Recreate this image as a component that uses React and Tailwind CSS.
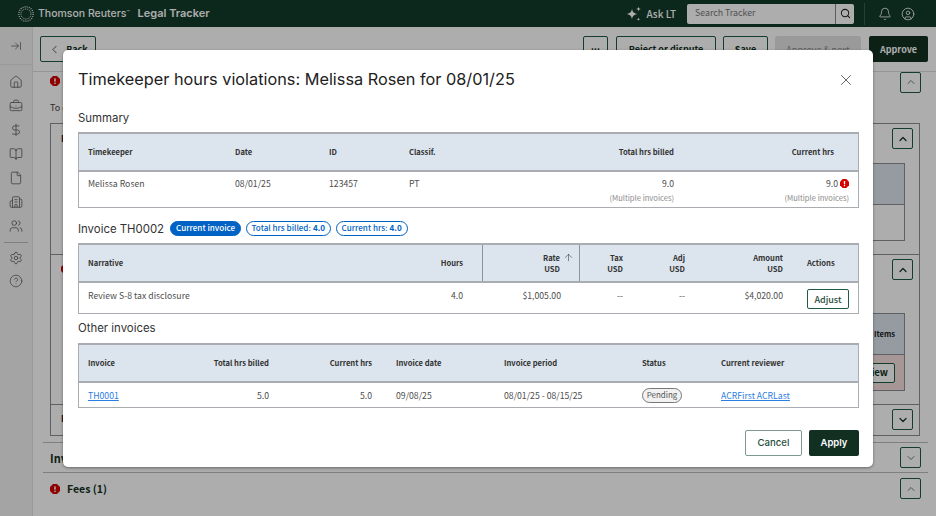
import React from "react";
import {
  ArrowRightToLine, Bell, BookOpen, BriefcaseBusiness, Building2, ChevronDown, ChevronLeft, ChevronUp,
  CircleHelp, CircleUser, DollarSign, File, Home, Search, Settings, Users, X, ArrowUp,
} from "lucide-react";

const BODY = "font-['Noto_Sans_CJK_JP','Noto_Sans',sans-serif]";
const HEAD = "font-['Inter','Liberation_Sans',sans-serif]";

function Octagon({ className }) {
  return (
    <svg viewBox="0 0 12 12" className={className}>
      <polygon points="3.6,0 8.4,0 12,3.6 12,8.4 8.4,12 3.6,12 0,8.4 0,3.6" fill="#d60000" />
      <rect x="5.1" y="2.6" width="1.8" height="4.4" rx="0.6" fill="#fff" />
      <rect x="5.1" y="7.8" width="1.8" height="1.7" rx="0.6" fill="#fff" />
    </svg>
  );
}

function Logo() {
  return (
    <svg viewBox="0 0 16 16" className="w-[16px] h-[16px]" fill="none" stroke="#fff">
      <circle cx="8" cy="8" r="7.2" strokeWidth="1.2" strokeDasharray="1 1.15" />
      <circle cx="8" cy="8" r="5" strokeWidth="0.8" strokeDasharray="1.2 0.8" />
    </svg>
  );
}

function AskIcon() {
  return (
    <svg viewBox="0 0 16 16" className="w-[16px] h-[16px]" fill="#fff">
      <path d="M6 2.5 C6.5 6 7.5 7.2 11.5 8 C7.5 8.8 6.5 10 6 13.5 C5.5 10 4.5 8.8 0.5 8 C4.5 7.2 5.5 6 6 2.5Z" />
      <path d="M12.5 0.5 C12.7 2 13.2 2.6 15 3 C13.2 3.4 12.7 4 12.5 5.5 C12.3 4 11.8 3.4 10 3 C11.8 2.6 12.3 2 12.5 0.5Z" />
      <path d="M12.5 11.5 C12.65 12.6 13 13 14.5 13.25 C13 13.5 12.65 13.9 12.5 15 C12.35 13.9 12 13.5 10.5 13.25 C12 13 12.35 12.6 12.5 11.5Z" />
    </svg>
  );
}

function CaretButton({ up = true, dark, className = "" }) {
  const Icon = up ? ChevronUp : ChevronDown;
  return (
    <div className={`w-[21px] h-[21px] shrink-0 flex items-center justify-center rounded-[2px] border border-[#1f5a44] bg-white ${className}`}>
      <Icon size={12} strokeWidth={dark ? 2.4 : 1.5} className={dark ? "text-[#123021]" : "text-[#2f5a49]"} />
    </div>
  );
}

function Sidebar() {
  const main = [Home, BriefcaseBusiness, DollarSign, BookOpen, File, Building2, Users];
  return (
    <div className="w-[33px] shrink-0 bg-[#f2f2f2] border-r border-[#e4e4e4] flex flex-col items-center text-[#555]">
      <div className="h-[38px] w-full flex items-center justify-center border-b border-[#e4e4e4]">
        <ArrowRightToLine size={12} strokeWidth={1.4} />
      </div>
      <div className="flex flex-col items-center gap-[10px] mt-[10px]">
        {main.map((Icon, i) => <Icon key={i} size={14} strokeWidth={1.3} />)}
      </div>
      <div className="w-[24px] border-t border-[#bbb] mt-[9px] mb-[8px]" />
      <div className="flex flex-col items-center gap-[9px]">
        <Settings size={14} strokeWidth={1.3} />
        <CircleHelp size={14} strokeWidth={1.2} />
      </div>
    </div>
  );
}

function TopButton({ children, className = "" }) {
  return (
    <div className={`h-[26px] flex items-center justify-center rounded-[2px] border border-[#1f5a44] text-[9px] leading-none font-semibold text-[#123021] ${className}`}>
      {children}
    </div>
  );
}

function InnerTable({ pink }) {
  return (
    <div className="ml-auto mr-[8px] w-[200px] border border-[#8a8f94]">
      <div className="h-[41px] bg-[#dce5ed] border-b border-[#8a8f94] flex items-center justify-end pr-[9px] text-[7.6px] font-semibold text-[#222]">
        {pink ? "Items" : ""}
      </div>
      <div className={`h-[35px] flex items-center justify-end pr-[9px] ${pink ? "bg-[#f7dede]" : "bg-white"}`}>
        {pink && <div className="w-[60px] h-[20px] bg-white border border-[#1f5a44] rounded-[2px] text-[9.5px] font-semibold flex items-center justify-end pr-[6px] text-[#123021]">Review</div>}
      </div>
    </div>
  );
}

function Page() {
  return (
    <div className="flex-1 min-w-0 bg-white flex flex-col">
      <div className="h-[45px] shrink-0 border-b border-[#dcdcdc] flex items-center pl-[7px] pr-[8px]">
        <TopButton className="w-[56px] gap-[5px] text-[9.5px] pt-[1px]"><ChevronLeft size={13} strokeWidth={1.4} />Back</TopButton>
        <div className="flex-1" />
        <TopButton className="w-[25px] mr-[8px] pb-[5px]">...</TopButton>
        <TopButton className="w-[100px] mr-[7px] pt-[1px]">Reject or dispute</TopButton>
        <TopButton className="w-[45px] mr-[7px] pt-[1px]">Save</TopButton>
        <div className="w-[86px] h-[26px] mr-[8px] pt-[1px] rounded-[2px] bg-[#e4e4e4] text-[#888] text-[9px] flex items-center justify-center">Approve &amp; next</div>
        <div className="w-[59px] h-[26px] pt-[1px] rounded-[2px] bg-[#123021] text-white text-[9px] font-semibold flex items-center justify-center">Approve</div>
      </div>
      <div>
        <div className="flex items-center pl-[17px] pr-[15px] h-[18px]">
          <Octagon className="w-[10px] h-[10px]" />
          <CaretButton className="ml-auto mt-[2px]" />
        </div>
        <div className="pl-[17px] pt-[11px] h-[33px] text-[9px] leading-[13px] text-[#444]">To continue</div>
        <div className="ml-[17px] w-[870px] border border-[#8a8f94]">
          <div className="h-[131px] border-b border-[#8a8f94] pt-[4px] pr-[6px]">
            <div className="flex items-start">
              <div className="pl-[10px] pt-[5px] text-[9px] leading-[12px] font-semibold text-[#222]">B</div>
              <CaretButton dark className="ml-auto" />
            </div>
            <div className="mt-[14px]"><InnerTable /></div>
          </div>
          <div className="h-[150px] border-b border-[#8a8f94] pt-[4px] pr-[6px]">
            <div className="flex items-start">
              <Octagon className="w-[10px] h-[10px] ml-[10px] mt-[5px]" />
              <CaretButton dark className="ml-auto" />
            </div>
            <div className="mt-[33px]"><InnerTable pink /></div>
          </div>
          <div className="h-[30px] pt-[4px] pr-[6px] flex items-start">
            <div className="pl-[10px] pt-[4px] text-[9px] leading-[12px] font-semibold text-[#222]">B</div>
            <CaretButton dark up={false} className="ml-auto" />
          </div>
        </div>
        <div className="ml-[10px] mr-[8px] mt-[6px] border-t border-[#bbb] h-[30px] pl-[7px] pr-[7px] flex items-center">
          <span className="text-[11px] leading-[14px] font-semibold text-[#123021]">Invoice</span>
          <CaretButton up={false} className="ml-auto" />
        </div>
        <div className="ml-[10px] mr-[8px] border-t border-[#bbb] h-[32px] pl-[7px] pr-[7px] flex items-center">
          <Octagon className="w-[10px] h-[10px] mr-[7px]" />
          <span className="text-[10.5px] leading-[14px] font-semibold text-[#123021]">Fees (1)</span>
          <CaretButton className="ml-auto" />
        </div>
      </div>
    </div>
  );
}

function Table({ cols, head, rows }) {
  return (
    <div className="border border-t-2 border-[#a9adb1]">
      <div className="flex h-[38px] bg-[#dce5ed] border-b-2 border-[#a9adb1]">
        {cols.map((c, i) => (
          <div
            key={i}
            style={{ width: c.w, paddingLeft: c.pl, paddingRight: c.pr }}
            className={`shrink-0 flex flex-col justify-center text-[7.6px] leading-[11.5px] font-semibold text-[#333] ${c.right ? "items-end text-right" : ""} ${c.rule ? "border-x border-[#8d9398]" : ""}`}
          >
            {head[i]}
          </div>
        ))}
      </div>
      {rows}
    </div>
  );
}

const summaryCols = [
  { w: 150, pl: 9 }, { w: 95, pl: 6 }, { w: 80, pl: 5 }, { w: 104, pl: 5 },
  { w: 186, pr: 20, right: true }, { w: 164, pr: 24, right: true },
];
const invoiceCols = [
  { w: 331, pl: 9 }, { w: 72, pr: 19, right: true }, { w: 98, pr: 19, right: true, rule: true },
  { w: 63, pr: 20, right: true }, { w: 61, pr: 19, right: true }, { w: 98, pr: 19, right: true },
  { w: 56, pl: 5 },
];
const otherCols = [
  { w: 86, pl: 9 }, { w: 123, pr: 19, right: true }, { w: 104, pr: 20, right: true }, { w: 107, pl: 4 },
  { w: 139, pl: 5 }, { w: 78, pl: 4 }, { w: 142, pl: 5 },
];

function Row({ cols, cells, h, align = "items-center" }) {
  return (
    <div className={`flex text-[8.7px] leading-[13px] text-[#4d4d4d] ${align}`} style={{ height: h }}>
      {cols.map((c, i) => (
        <div
          key={i}
          style={{ width: c.w, paddingLeft: c.pl, paddingRight: c.pr }}
          className={`shrink-0 ${c.right ? "text-right" : ""}`}
        >
          {cells[i]}
        </div>
      ))}
    </div>
  );
}

function Pill({ children, solid }) {
  return (
    <span className={`h-[15px] px-[5px] rounded-full flex items-center text-[8.1px] leading-none font-medium border border-[#0062c4] ${solid ? "bg-[#0062c4] text-white" : "bg-white text-[#0062c4]"}`}>
      {children}
    </span>
  );
}

function SectionTitle({ children, className = "" }) {
  return <div className={`${HEAD} text-[11.4px] leading-[16px] text-[#333] ${className}`}>{children}</div>;
}

function Modal() {
  const sub = <div className="text-[7.6px] leading-[11px] text-[#8a8a8a] mt-[2px]">(Multiple invoices)</div>;
  const link = "text-[#2a7de1] underline";
  return (
    <div className="absolute left-[63px] top-[50px] w-[810px] h-[417px] bg-white rounded-[5px] shadow-[0_1px_3px_rgba(0,0,0,0.4)] pl-[15px] pr-[14px] flex flex-col">
      <div className="flex items-center pt-[16px] h-[42px]">
        <h1 className={`${HEAD} text-[16.3px] leading-[24px] text-[#212121]`}>Timekeeper hours violations: Melissa Rosen for 08/01/25</h1>
        <X size={18} strokeWidth={1.1} className="ml-auto mr-[4px] mt-[2px] text-[#444]" />
      </div>
      <SectionTitle className="mt-[18px] mb-[6px]">Summary</SectionTitle>
      <Table
        cols={summaryCols}
        head={["Timekeeper", "Date", "ID", "Classif.", "Total hrs billed", "Current hrs"]}
        rows={
          <Row
            cols={summaryCols.map((c, i) => (i === 5 ? { ...c, pr: 9 } : c))}
            h={35}
            align="items-start pt-[5px]"
            cells={[
              "Melissa Rosen", "08/01/25", "123457", "PT",
              <>9.0{sub}</>,
              <>
                <div className="flex items-center justify-end gap-[2px]">9.0<Octagon className="w-[9px] h-[9px]" /></div>
                {sub}
              </>,
            ]}
          />
        }
      />
      <div className="flex items-center gap-[4.5px] mt-[12px] mb-[6px] h-[17px]">
        <SectionTitle className="mr-[1.5px]">Invoice TH0002</SectionTitle>
        <Pill solid>Current invoice</Pill>
        <Pill>Total hrs billed: <b className="ml-[2px] font-bold">4.0</b></Pill>
        <Pill>Current hrs: <b className="ml-[2px] font-bold">4.0</b></Pill>
      </div>
      <Table
        cols={invoiceCols}
        head={[
          "Narrative", "Hours",
          <>
            <span className="relative">
              Rate
              <ArrowUp size={11} strokeWidth={1.2} className="absolute left-[calc(100%+3px)] top-0 text-[#333]" />
            </span>
            <span>USD</span>
          </>,
          <><span>Tax</span><span>USD</span></>,
          <><span>Adj</span><span>USD</span></>,
          <><span>Amount</span><span>USD</span></>,
          "Actions",
        ]}
        rows={
          <Row
            cols={invoiceCols}
            h={30}
            align="items-start pt-[6px]"
            cells={[
              "Review S-8 tax disclosure", "4.0", "$1,005.00", "--", "--", "$4,020.00",
              <div className="w-[42px] h-[20px] pt-[1px] rounded-[2px] border border-[#1f5a44] text-[9px] font-medium text-[#1f4f3c] flex items-center justify-center">Adjust</div>,
            ]}
          />
        }
      />
      <SectionTitle className="mt-[6px] mb-[7px]">Other invoices</SectionTitle>
      <Table
        cols={otherCols}
        head={["Invoice", "Total hrs billed", "Current hrs", "Invoice date", "Invoice period", "Status", "Current reviewer"]}
        rows={
          <Row
            cols={otherCols}
            h={24}
            cells={[
              <span className={link}>TH0001</span>, "5.0", "5.0", "09/08/25", "08/01/25 - 08/15/25",
              <span className="inline-flex items-center justify-center w-[40px] h-[15px] rounded-full border border-[#777] bg-[#f2f2f2] text-[8px] leading-none text-[#555]">Pending</span>,
              <span className={link}>ACRFirst ACRLast</span>,
            ]}
          />
        }
      />
      <div className="flex justify-end gap-[7px] mt-[22px]">
        <div className={`${HEAD} w-[57px] h-[26px] rounded-[2px] border border-[#7d9a8d] text-[9.6px] font-medium text-[#1f4f3c] flex items-center justify-center`}>Cancel</div>
        <div className={`${HEAD} w-[50px] h-[26px] rounded-[2px] bg-[#123021] text-white text-[9.5px] font-semibold flex items-center justify-center`}>Apply</div>
      </div>
    </div>
  );
}

export default function App() {
  return (
    <div className={`relative w-[936px] h-[516px] overflow-hidden bg-white flex flex-col ${BODY}`}>
      <div className="h-[27px] shrink-0 bg-[#123a2a] flex items-center pl-[18px] text-white">
        <Logo />
        <span className={`${HEAD} ml-[4px] text-[10.5px] font-medium`}>Thomson Reuters<sup className="text-[5px]">™</sup></span>
        <span className={`${HEAD} ml-[8px] text-[11px] font-semibold`}>Legal Tracker</span>
        <div className="flex-1" />
        <AskIcon />
        <span className="text-[10px] leading-none font-medium ml-[4px] mr-[11px]">Ask LT</span>
        <div className="w-[167px] h-[20px] rounded-[2px] bg-white flex items-center text-[#777] text-[8.8px] leading-none">
          <span className="pl-[8px] flex-1">Search Tracker</span>
          <div className="w-[19px] h-full border-l border-[#888] flex items-center justify-center text-[#222]">
            <Search size={11} strokeWidth={2.2} />
          </div>
        </div>
        <div className="h-[22px] border-l border-[#3c5a4c] ml-[10px] mr-[13px]" />
        <Bell size={14} strokeWidth={1.4} className="mr-[9px]" />
        <CircleUser size={14} strokeWidth={1.4} className="mr-[21px]" />
      </div>
      <div className="flex-1 min-h-0 flex">
        <Sidebar />
        <Page />
      </div>
      <div className="absolute inset-0 bg-black/[0.32]" />
      <Modal />
    </div>
  );
}
